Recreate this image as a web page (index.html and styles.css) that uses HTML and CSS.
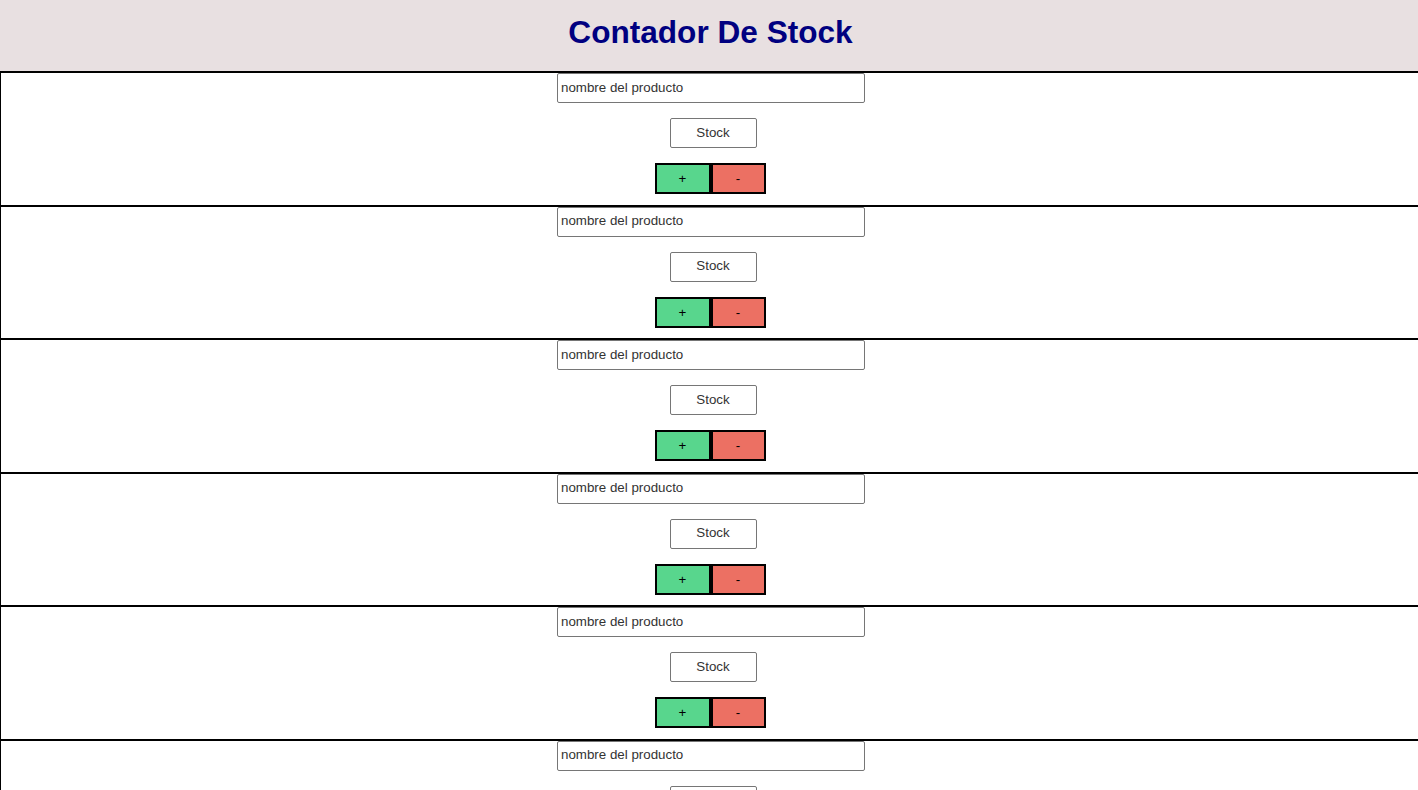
FILE: index.html
```html
<!DOCTYPE html>
<html lang="es">
<head>
<meta charset="utf-8">
<title>Contador De Stock</title>
<link rel="stylesheet" href="styles.css">
</head>
<body>
<header class="header">
  <h1 class="title">Contador De Stock</h1>
</header>
<main class="list">
  <div class="card">
    <input class="name" type="text" value="nombre del producto">
    <div class="stock">Stock</div>
    <div class="controls"><button class="btn plus">+</button><button class="btn minus">-</button></div>
  </div>
  <div class="card">
    <input class="name" type="text" value="nombre del producto">
    <div class="stock">Stock</div>
    <div class="controls"><button class="btn plus">+</button><button class="btn minus">-</button></div>
  </div>
  <div class="card">
    <input class="name" type="text" value="nombre del producto">
    <div class="stock">Stock</div>
    <div class="controls"><button class="btn plus">+</button><button class="btn minus">-</button></div>
  </div>
  <div class="card">
    <input class="name" type="text" value="nombre del producto">
    <div class="stock">Stock</div>
    <div class="controls"><button class="btn plus">+</button><button class="btn minus">-</button></div>
  </div>
  <div class="card">
    <input class="name" type="text" value="nombre del producto">
    <div class="stock">Stock</div>
    <div class="controls"><button class="btn plus">+</button><button class="btn minus">-</button></div>
  </div>
  <div class="card">
    <input class="name" type="text" value="nombre del producto">
    <div class="stock">Stock</div>
    <div class="controls"><button class="btn plus">+</button><button class="btn minus">-</button></div>
  </div>
</main>
</body>
</html>
```

FILE: styles.css
```css
* { box-sizing: border-box; }
html, body { margin: 0; padding: 0; }
body {
  font-family: "Liberation Sans", Arial, sans-serif;
  background: #ffffff;
  overflow: hidden;
}
.header {
  height: 71px;
  background: #e8e0e1;
  padding-top: 14px;
  text-align: center;
}
.title {
  margin: 0;
  font-size: 31.6px;
  line-height: 37px;
  font-weight: bold;
  color: #000080;
  padding-left: 3px;
}
.list { display: flex; flex-direction: column; }
.card {
  height: 133.6px;
  flex: none;
  border-top: 2px solid #000;
  border-left: 1px solid #000;
  display: flex;
  flex-direction: column;
  align-items: center;
}
.name {
  width: 308px;
  height: 30px;
  margin: 0 0 0 3px;
  padding: 0 3px 2px;
  border: 1px solid #767676;
  border-radius: 2px;
  font-family: "Liberation Sans", Arial, sans-serif;
  font-size: 13.33px;
  color: #333;
  background: #fff;
}
.stock {
  width: 87px;
  height: 30px;
  margin: 15px 0 0 7px;
  padding-bottom: 2px;
  border: 1px solid #767676;
  border-radius: 2px;
  display: flex;
  align-items: center;
  justify-content: center;
  font-size: 13.33px;
  color: #333;
}
.controls {
  margin: 15px 0 0 1px;
  display: flex;
}
.btn {
  height: 31px;
  border: 2px solid #000;
  margin: 0;
  padding: 0;
  font-family: "Liberation Sans", Arial, sans-serif;
  font-size: 13.33px;
  color: #000;
}
.plus { width: 56px; background: #58d68d; }
.minus { width: 55px; background: #ec7063; }
```
